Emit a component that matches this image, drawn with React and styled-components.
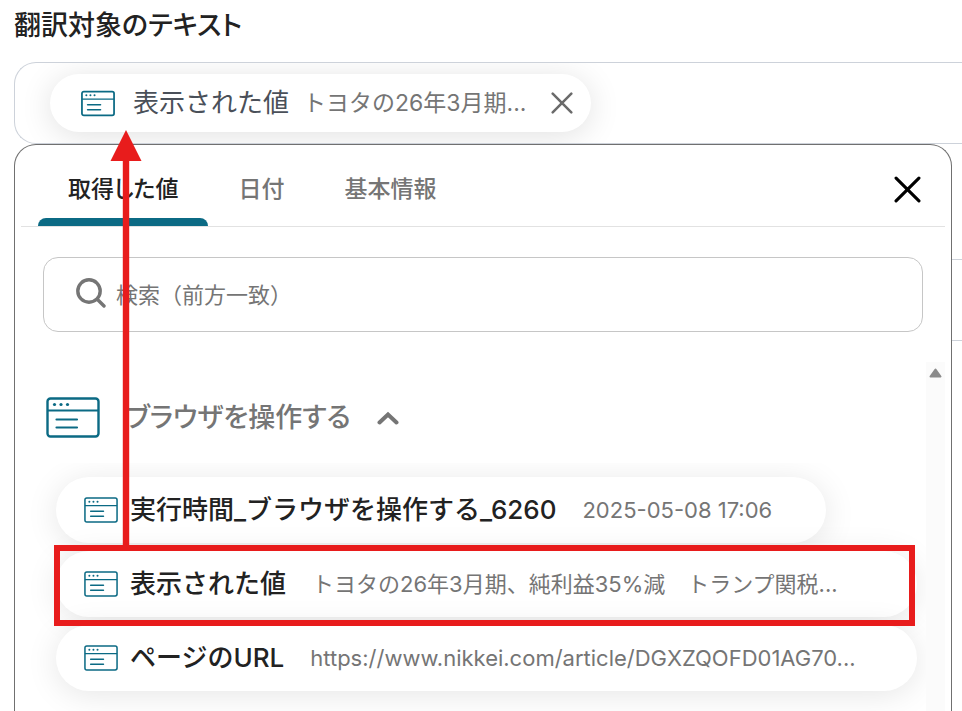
import React, { useState } from "react";
import styled, { createGlobalStyle } from "styled-components";

const tabs = ["取得した値", "日付", "基本情報"];

const values = [
  { id: "time", name: "実行時間_ブラウザを操作する_6260", preview: "2025-05-08 17:06" },
  { id: "text", name: "表示された値", preview: "トヨタの26年3月期、純利益35%減　トランプ関税...", wide: true, marked: true },
  { id: "url", name: "ページのURL", preview: "https://www.nikkei.com/article/DGXZQOFD01AG70...", wide: true },
];

const BrowserIcon = ({ width, height, stroke }) => (
  <svg width={width} height={height} viewBox="0 0 54 41" fill="none" stroke="#0b6a84" aria-hidden="true">
    <rect x="1.5" y="1.5" width="51" height="38" rx="3" strokeWidth={stroke} />
    <path d="M1.5 13.5H52.5" strokeWidth={stroke * 0.8} />
    <path d="M10.5 22.5H31M10.5 30.5H31" strokeWidth={stroke * 0.9} strokeLinecap="round" />
    <g fill="#0b6a84" stroke="none">
      <circle cx="8.5" cy="7.5" r="1.6" />
      <circle cx="15" cy="7.5" r="1.6" />
      <circle cx="21.5" cy="7.5" r="1.6" />
    </g>
  </svg>
);

const CrossIcon = ({ size, stroke }) => (
  <svg width={size} height={size} viewBox="0 0 26 26" fill="none" stroke="currentColor" strokeWidth={stroke} strokeLinecap="round" aria-hidden="true">
    <path d="M2 2L24 24M24 2L2 24" />
  </svg>
);

export default function App() {
  const [currentTab, setCurrentTab] = useState(tabs[0]);
  const [open, setOpen] = useState(true);
  const [keyword, setKeyword] = useState("");

  return <>
    <GlobalStyle />
    <Page>
      <Title>翻訳対象のテキスト</Title>
      <Field>
        <SelectedChip>
          <BrowserIcon width={34} height={27} stroke={2.8} />
          <SelectedName>表示された値</SelectedName>
          <Preview $large>トヨタの26年3月期...</Preview>
          <IconButton type="button" aria-label="削除">
            <CrossIcon size={22} stroke={3} />
          </IconButton>
        </SelectedChip>
      </Field>
      <Anchor>
        <Panel>
          <TabBar>
            <TabList role="tablist">
              {tabs.map((tab) => (
                <Tab key={tab} type="button" role="tab" aria-selected={tab === currentTab}
                  $active={tab === currentTab} onClick={() => setCurrentTab(tab)}>
                  {tab}
                </Tab>
              ))}
            </TabList>
            <CloseButton type="button" aria-label="閉じる">
              <CrossIcon size={27} stroke={3} />
            </CloseButton>
          </TabBar>
          <SearchBox>
            <SearchIcon width="30" height="30" viewBox="0 0 30 30" aria-hidden="true">
              <circle cx="13" cy="13" r="11.2" />
              <path d="M21.5 21.5L28 28" />
            </SearchIcon>
            <SearchInput type="text" aria-label="検索" placeholder="検索（前方一致）"
              value={keyword} onChange={(e) => setKeyword(e.target.value)} />
          </SearchBox>
          <ScrollArea>
            <Content>
              <GroupButton type="button" aria-expanded={open} onClick={() => setOpen(!open)}>
                <BrowserIcon width={54} height={41} stroke={2.4} />
                <GroupName>ブラウザを操作する</GroupName>
                <Chevron width="22" height="14" viewBox="0 0 22 14" $open={open} aria-hidden="true">
                  <path d="M2.5 11.5L11 3.5L19.5 11.5" />
                </Chevron>
              </GroupButton>
              {open && (
                <List>
                  {values.filter((v) => v.name.startsWith(keyword)).map((v) => (
                    <Row key={v.id} $wide={v.wide}>
                      <ValueChip type="button">
                        <BrowserIcon width={34} height={26} stroke={2.4} />
                        <ValueName>{v.name}</ValueName>
                        <Preview>{v.preview}</Preview>
                      </ValueChip>
                      {v.marked && <Marker />}
                    </Row>
                  ))}
                </List>
              )}
            </Content>
            <Track>
              <svg width="13" height="10" viewBox="0 0 13 10" aria-hidden="true">
                <path d="M6.5 1.5L11.5 8.5H1.5Z" fill="#8b8b8b" stroke="#8b8b8b" strokeWidth="2" strokeLinejoin="round" />
              </svg>
            </Track>
          </ScrollArea>
          <Arrow width="32" height="416" viewBox="0 0 32 416" aria-hidden="true">
            <path d="M16 0L31.5 31H19.2V416H12.8V31H0.5Z" fill="#e81c1c" />
          </Arrow>
        </Panel>
      </Anchor>
      <NextField />
    </Page>
  </>;
}

const GlobalStyle = createGlobalStyle`
  * {
    box-sizing: border-box;
  }
  body {
    margin: 0;
    background-color: #ffffff;
    font-family: Inter, "Noto Sans CJK JP", sans-serif;
  }
  button, input {
    font: inherit;
    color: inherit;
    border: none;
    background: none;
    padding: 0;
  }
  button {
    cursor: pointer;
  }
  svg {
    flex-shrink: 0;
  }
`;

const Page = styled.main`
  height: 100vh;
  overflow: hidden;
  padding: 8px 0 0 14px;
`;

const Title = styled.h1`
  margin: 0 0 18px;
  font-size: 27px;
  line-height: 36px;
  font-weight: 500;
  font-feature-settings: "palt";
  color: #222222;
`;

const Field = styled.div`
  height: 82px;
  padding: 11px 35px;
  border: 1px solid #cdd2da;
  border-right: none;
  border-radius: 22px 0 0 22px;
  overflow: hidden;
`;

const NextField = styled(Field)`
  margin-top: 115px;
`;

const SelectedChip = styled.div`
  display: inline-flex;
  align-items: center;
  height: 58px;
  padding: 0 18px 0 31px;
  border-radius: 29px;
  background-color: #ffffff;
  box-shadow: 0 4px 32px rgba(0, 0, 0, 0.12);
`;

const SelectedName = styled.span`
  margin: 0 14px 0 18px;
  font-size: 26px;
  line-height: 36px;
  color: #4a5059;
`;

const Preview = styled.span`
  font-size: ${({ $large }) => ($large ? "23px" : "22px")};
  line-height: 32px;
  white-space: nowrap;
  color: #757575;
`;

const IconButton = styled.button`
  display: flex;
  margin-left: 25px;
  color: #6b6b6b;
`;

const Anchor = styled.div`
  position: relative;
`;

const Panel = styled.section`
  position: absolute;
  z-index: 1;
  top: 0;
  left: 0;
  right: 10px;
  padding: 0 6px;
  border: 1px solid #707070;
  border-bottom: none;
  border-radius: 22px 22px 0 0;
  background-color: #ffffff;
`;

const TabBar = styled.div`
  display: flex;
  align-items: center;
  justify-content: space-between;
  height: 82px;
  padding: 0 24px 0 17px;
  border-bottom: 1px solid #e2e2e2;
`;

const TabList = styled.div`
  display: flex;
  align-self: stretch;
`;

const Tab = styled.button`
  position: relative;
  padding: 6px 30px 0;
  font-size: 23px;
  line-height: 32px;
  font-weight: 500;
  font-feature-settings: "palt";
  color: ${({ $active }) => ($active ? "#222222" : "#757575")};
  &::after {
    content: "";
    position: absolute;
    left: 0;
    right: 0;
    bottom: 0;
    height: 8px;
    border-radius: 8px 8px 0 0;
    background-color: ${({ $active }) => ($active ? "#0b6a84" : "transparent")};
  }
`;

const CloseButton = styled.button`
  display: flex;
  margin-top: 8px;
  color: #000000;
`;

const SearchBox = styled.div`
  display: flex;
  align-items: center;
  gap: 10px;
  height: 75px;
  margin: 30px 22px;
  padding: 0 32px;
  border: 1px solid #c6c6c6;
  border-radius: 15px;
`;

const SearchIcon = styled.svg`
  margin-bottom: 4px;
  fill: none;
  stroke: #757575;
  stroke-width: 3.4;
  stroke-linecap: round;
`;

const SearchInput = styled.input`
  flex: 1;
  min-width: 0;
  font-size: 22px;
  line-height: 32px;
  outline: none;
  &::placeholder {
    color: #757575;
    opacity: 1;
  }
`;

const ScrollArea = styled.div`
  display: flex;
`;

const Content = styled.div`
  flex: 1;
  min-width: 0;
  padding-top: 35px;
`;

const Track = styled.div`
  display: flex;
  justify-content: center;
  width: 19px;
  padding-top: 6px;
  background-color: #fbfbfb;
`;

const GroupButton = styled.button`
  display: flex;
  align-items: center;
  margin-left: 25px;
`;

const GroupName = styled.span`
  margin: 0 26px;
  font-size: 27px;
  line-height: 36px;
  font-weight: 500;
  font-feature-settings: "palt";
  color: #757575;
`;

const Chevron = styled.svg`
  fill: none;
  stroke: #757575;
  stroke-width: 4;
  stroke-linecap: round;
  transform: ${({ $open }) => ($open ? "none" : "rotate(180deg)")};
`;

const List = styled.ul`
  display: flex;
  flex-direction: column;
  gap: 8px;
  margin: 25px 0 0;
  padding: 14px 9px 60px 35px;
  list-style: none;
  overflow: hidden;
`;

const Row = styled.li`
  position: relative;
  align-self: ${({ $wide }) => ($wide ? "stretch" : "flex-start")};
`;

const ValueChip = styled.button`
  display: flex;
  align-items: center;
  width: 100%;
  height: 66px;
  padding: 0 54px 0 28px;
  border-radius: 33px;
  background-color: #ffffff;
  box-shadow: 0 4px 32px rgba(0, 0, 0, 0.1);
`;

const ValueName = styled.span`
  margin: 0 26px 0 12px;
  font-size: 26px;
  line-height: 36px;
  font-weight: 500;
  white-space: nowrap;
  color: #222222;
`;

const Marker = styled.div`
  position: absolute;
  z-index: 1;
  top: -6px;
  bottom: -9px;
  left: -2px;
  right: 2px;
  border: 6px solid #e81c1c;
  pointer-events: none;
`;

const Arrow = styled.svg`
  position: absolute;
  top: -15px;
  left: 95px;
  pointer-events: none;
`;
